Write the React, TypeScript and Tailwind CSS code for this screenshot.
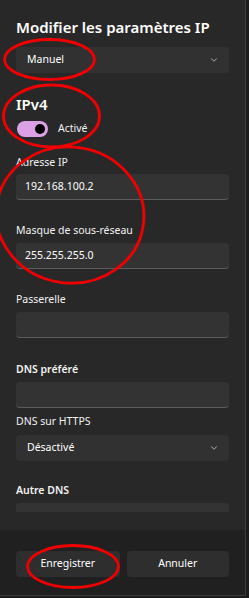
import { ChevronDown } from "lucide-react";

const FONT = "font-['Noto_Sans','Liberation_Sans',sans-serif]";

function Label({ text, bold = false, className = "" }: { text: string; bold?: boolean; className?: string }) {
  return (
    <div className={`h-[14px] flex items-center text-[10.5px] leading-[14px] text-[#f2f2f2] ${bold ? "font-semibold" : ""} ${className}`}>
      {text}
    </div>
  );
}

function Input({ value = "", className = "" }: { value?: string; className?: string }) {
  return (
    <div
      className={`h-[26px] rounded-[4px] bg-[#333333] border-b border-[#5c5c5c] flex items-center pl-[9px] text-[10.5px] text-white shrink-0 ${className}`}
    >
      {value}
    </div>
  );
}

function Select({ value, className = "" }: { value: string; className?: string }) {
  return (
    <div
      className={`h-[26px] rounded-[4px] bg-[#313131] flex items-center justify-between pl-[11px] pr-[10px] text-[10.5px] text-white shrink-0 ${className}`}
    >
      <span>{value}</span>
      <ChevronDown size={10} strokeWidth={2} className="text-[#c4c4c4]" />
    </div>
  );
}

export default function App() {
  return (
    <div className={`relative w-[249px] h-[598px] bg-[#1b1b1b] overflow-hidden ${FONT}`}>
      <div className="w-[246px] h-[596px] border-r border-b border-[#3d3d3d] bg-[#282828] flex flex-col">
        {/* scrolling content */}
        <div className="h-[512px] overflow-hidden px-4 pt-[17px] flex flex-col shrink-0">
          <h1 className="h-[20px] flex items-center text-[15px] font-semibold text-white leading-[20px]">
            Modifier les paramètres IP
          </h1>
          <Select value="Manuel" className="mt-[10px]" />

          <h2 className="mt-[21px] h-[20px] flex items-center text-[15px] font-semibold text-white leading-[20px]">IPv4</h2>
          <div className="mt-[7px] h-[16px] flex items-center gap-[10px] pl-[1px]">
            <div className="w-[31px] h-[16px] rounded-full bg-[#dba1e4] flex items-center justify-end pr-[3px]">
              <div className="w-[10px] h-[10px] rounded-full bg-black" />
            </div>
            <span className="text-[10.5px] text-[#f2f2f2]">Activé</span>
          </div>

          <Label text="Adresse IP" className="mt-[18px]" />
          <Input value="192.168.100.2" className="mt-[5px]" />

          <Label text="Masque de sous-réseau" className="mt-[23px]" />
          <Input value="255.255.255.0" className="mt-[6px]" />

          <Label text="Passerelle" className="mt-[23px]" />
          <Input className="mt-[6px]" />

          <Label text="DNS préféré" bold className="mt-[24px]" />
          <Input className="mt-[6px]" />

          <Label text="DNS sur HTTPS" className="mt-[6px]" />
          <Select value="Désactivé" className="mt-[7px]" />

          <Label text="Autre DNS" bold className="mt-[22px]" />
          <Input className="mt-[6px]" />
        </div>
        <div className="h-[18px] shrink-0" />

        {/* footer */}
        <div className="flex-1 bg-[#202020] px-4 pt-[21px] flex gap-[7px]">
          <button className="w-[104px] h-[26px] rounded-[4px] bg-[#2e2e2e] text-[10.5px] text-white">Enregistrer</button>
          <button className="w-[103px] h-[26px] rounded-[4px] bg-[#2e2e2e] text-[10.5px] text-white">Annuler</button>
        </div>
      </div>

      {/* red annotation marks */}
      <svg className="absolute inset-0 pointer-events-none" width="249" height="598" viewBox="0 0 249 598">
        <g fill="none" stroke="#f00000" strokeWidth="2.8">
          <ellipse cx="49.5" cy="59.5" rx="45" ry="20" />
          <ellipse cx="51.5" cy="116" rx="48" ry="31" />
          <ellipse cx="70" cy="215" rx="74" ry="68" transform="rotate(8 70 215)" />
          <ellipse cx="73" cy="566.5" rx="45.5" ry="21" />
        </g>
      </svg>
    </div>
  );
}
